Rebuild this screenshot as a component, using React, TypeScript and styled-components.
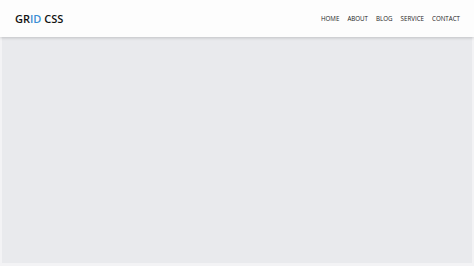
import React from 'react';
import styled, { createGlobalStyle } from 'styled-components';

const GlobalStyle = createGlobalStyle`
  html, body {
    margin: 0;
    padding: 0;
    background: #f3f3f5;
  }
  body {
    font-family: 'Open Sans', 'Liberation Sans', sans-serif;
  }
`;

const Page = styled.div`
  width: 474px;
  height: 266px;
  display: flex;
  flex-direction: column;
  overflow: hidden;
`;

const Header = styled.header`
  height: 37px;
  flex-shrink: 0;
  background: #fdfdfd;
  display: flex;
  align-items: center;
  justify-content: space-between;
  padding: 0 14px 0 15px;
  box-shadow: 0 1px 3px rgba(0, 0, 0, 0.18);
  position: relative;
  z-index: 1;
`;

const Logo = styled.div`
  font-size: 11px;
  font-weight: 600;
  color: #111;
`;

const Accent = styled.span`
  color: #3a8fd4;
`;

const Nav = styled.nav`
  display: flex;
  gap: 8px;
`;

const NavLink = styled.a`
  font-size: 6.2px;
  color: #222;
  text-transform: uppercase;
  text-decoration: none;
`;

const Main = styled.main`
  flex: 1;
  margin: 0 2px 3px 2px;
  background: #e9eaed;
`;

const links = ['Home', 'About', 'Blog', 'Service', 'Contact'];

function App(): React.ReactElement {
  return (
    <Page>
      <GlobalStyle />
      <Header>
        <Logo>
          GR<Accent>ID</Accent> CSS
        </Logo>
        <Nav>
          {links.map((l) => (
            <NavLink key={l} href="#">
              {l}
            </NavLink>
          ))}
        </Nav>
      </Header>
      <Main />
    </Page>
  );
}

export default App;
